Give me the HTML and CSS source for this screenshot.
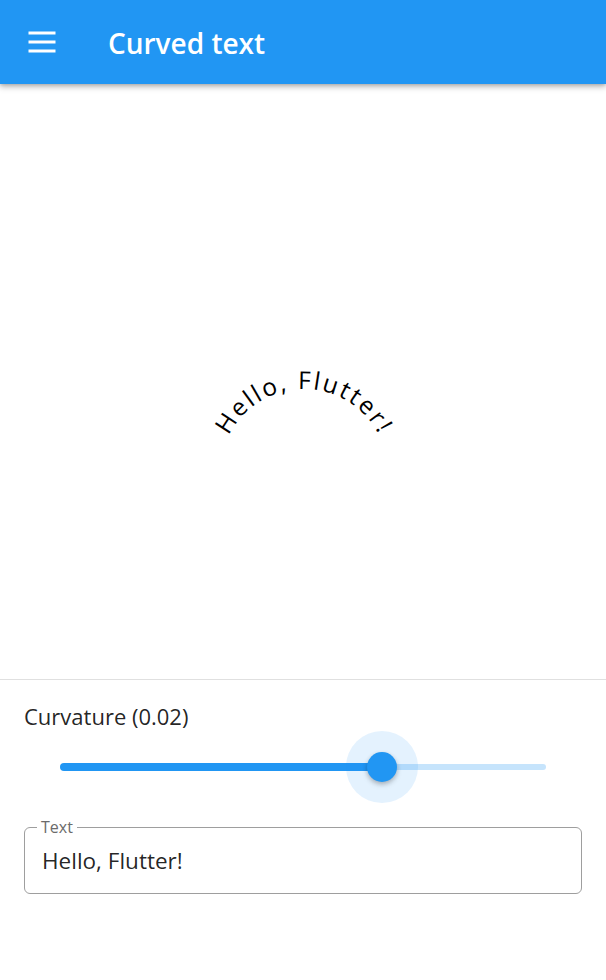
FILE: index.html
```html
<!DOCTYPE html>
<html>
<head>
<meta charset="utf-8">
<link rel="stylesheet" href="styles.css">
</head>
<body>
<header class="appbar">
  <div class="menu-btn">
    <svg width="36" height="36" viewBox="0 0 24 24"><path d="M3 6h18M3 12h18M3 18h18" stroke="#fff" stroke-width="2" fill="none"/></svg>
  </div>
  <h1 class="title">Curved text</h1>
</header>
<main class="canvas">
  <svg class="curve" width="606" height="596" viewBox="0 0 606 596">
    <path id="arc" d="M220 389 A84 84 0 0 1 388 389" fill="none"/>
    <text class="curve-text"><textPath href="#arc" startOffset="50%" text-anchor="middle">Hello, Flutter!</textPath></text>
  </svg>
</main>
<section class="controls">
  <div class="label">Curvature (0.02)</div>
  <div class="slider">
    <div class="track">
      <div class="active" style="width:66.3%"></div>
      <div class="inactive"></div>
      <div class="thumb-wrap" style="left:66.3%">
        <div class="overlay"></div>
        <div class="thumb"></div>
      </div>
    </div>
  </div>
  <fieldset class="field">
    <legend class="field-label">Text</legend>
    <div class="field-value">Hello, Flutter!</div>
  </fieldset>
</section>
</body>
</html>
```
FILE: styles.css
```css
* { box-sizing: border-box; }
html, body { margin: 0; padding: 0; background: #fff; }
body {
  width: 606px;
  height: 980px;
  overflow: hidden;
  font-family: "Open Sans", "Noto Sans", sans-serif;
  color: rgba(0,0,0,0.87);
}
.appbar {
  height: 84px;
  background: #2196F3;
  display: flex;
  align-items: center;
  padding-left: 24px;
  box-shadow: 0 3px 6px rgba(0,0,0,0.25), 0 1px 3px rgba(0,0,0,0.15);
  position: relative;
  z-index: 1;
}
.menu-btn { width: 36px; height: 36px; display: flex; }
.title {
  margin: 2px 0 0 48px;
  color: #fff;
  font-size: 28px;
  font-weight: 600;
  letter-spacing: 0;
}
.canvas {
  height: 596px;
  border-bottom: 1px solid #e0e0e0;
  display: flex;
}
.curve { display: block; }
.curve-text {
  font-family: "Open Sans", sans-serif;
  font-size: 24.5px;
  letter-spacing: 2.2px;
  fill: #000;
}
.controls { padding: 21px 24px 0; }
.label { font-size: 22px; line-height: 30px; }
.slider { height: 72px; padding: 0 36px; display: flex; align-items: center; margin-top: 0; }
.track { position: relative; flex: 1; height: 8px; display: flex; align-items: center; }
.active { height: 8px; background: #2196F3; border-radius: 4px 0 0 4px; }
.inactive { flex: 1; height: 6px; background: rgba(33,150,243,0.26); border-radius: 0 3px 3px 0; }
.thumb-wrap { position: absolute; top: 50%; width: 0; height: 0; }
.overlay {
  position: absolute; left: -36px; top: -36px; width: 72px; height: 72px;
  border-radius: 50%; background: rgba(33,150,243,0.12);
}
.thumb {
  position: absolute; left: -15px; top: -15px; width: 30px; height: 30px;
  border-radius: 50%; background: #2196F3;
  box-shadow: 0 2px 4px rgba(0,0,0,0.2), 0 3px 6px rgba(0,0,0,0.1);
}
.field {
  margin: 15px 0 0;
  padding: 0 17px;
  height: 76px;
  border: 1px solid #9e9e9e;
  border-radius: 6px;
}
.field-label {
  font-size: 16px;
  color: #6b6b6b;
  padding: 0 4px;
  margin-left: -5px;
  line-height: 18px;
}
.field-value { font-size: 22.5px; line-height: 30px; padding-top: 10px; }
```
